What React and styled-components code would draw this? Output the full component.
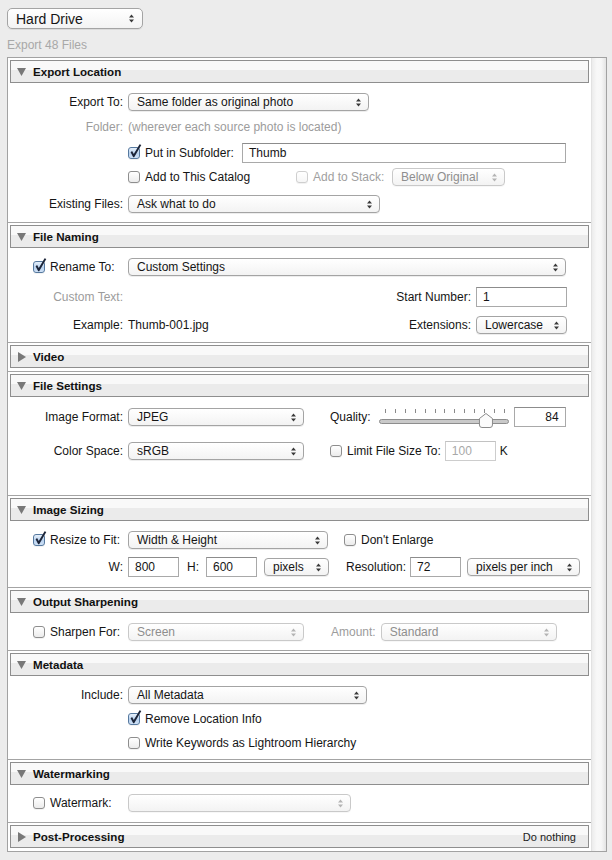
import React from "react";
import styled, { createGlobalStyle } from "styled-components";

const GlobalStyle = createGlobalStyle`
  html, body { margin: 0; padding: 0; background: #ececec; }
  body {
    font-family: "Liberation Sans", Arial, sans-serif;
    font-size: 12px;
    color: #151515;
  }
`;

const Page = styled.div`
  width: 612px;
  height: 860px;
  box-sizing: border-box;
  padding: 8px 0 0 7px;
  overflow: hidden;
`;

const Caption = styled.div`
  padding-top: 9px;
  line-height: 14px;
  height: 14px;
  margin-bottom: 5px;
  color: #a8a8a8;
  font-size: 12px;
`;

const Frame = styled.div`
  width: 600px;
  box-sizing: border-box;
  border: 1px solid #a2a2a2;
  display: flex;
  background: #fff;
`;

const Content = styled.div`
  flex: 1;
  min-width: 0;
  background: #fff;
`;

const ScrollTrack = styled.div`
  width: 15px;
  flex: none;
  border-left: 1px solid #e2e2e2;
  box-sizing: border-box;
  background: linear-gradient(90deg, #ececec 0%, #f8f8f8 35%, #f7f7f7 65%, #e4e4e4 100%);
`;

const Section = styled.div`
  border-top: ${(p) => (p.$first ? "none" : "1px solid #a4a4a4")};
`;

const Header = styled.div`
  margin: 2px 2px 0;
  height: 23px;
  box-sizing: border-box;
  border: 1px solid #8e8e8e;
  background: linear-gradient(#f9f9f9 0, #f9f9f9 45%, #ebebeb 45%, #ebebeb 100%);
  display: flex;
  align-items: center;
  padding: 0 12px 0 6px;
  font-weight: bold;
  font-size: 11.6px;
  color: #111;
`;

const HeaderTitle = styled.span`
  margin-left: ${(p) => p.$ml}px;
  flex: 1;
`;

const HeaderNote = styled.span`
  font-weight: normal;
  font-size: 11px;
  color: #222;
`;

const Body = styled.div`
  padding: ${(p) => p.$pt || 0}px 24px ${(p) => p.$pb || 0}px 0;
  height: ${(p) => (p.$h != null ? `${p.$h}px` : "auto")};
`;

const Row = styled.div`
  display: flex;
  align-items: center;
  height: ${(p) => p.$h}px;
`;

const LabelCell = styled.div`
  width: 120px;
  flex: none;
  box-sizing: border-box;
  display: flex;
  align-items: center;
  justify-content: ${(p) => (p.$left ? "flex-start" : "flex-end")};
  padding: ${(p) => (p.$left ? "0 0 0 25px" : "0 5px 0 0")};
  color: ${(p) => (p.$muted ? "#9c9c9c" : "#151515")};
  white-space: nowrap;
`;

const Text = styled.span`
  flex: none;
  white-space: nowrap;
  margin-left: ${(p) => p.$ml || 0}px;
  color: ${(p) => (p.$muted ? "#9c9c9c" : "#151515")};
`;

const Spacer = styled.div`
  flex: 1;
`;

const CheckItem = styled.div`
  display: flex;
  align-items: center;
  gap: 5px;
  flex: none;
  width: ${(p) => (p.$w ? `${p.$w}px` : "auto")};
  margin-left: ${(p) => p.$ml || 0}px;
  color: ${(p) => (p.$muted ? "#a0a0a0" : "#151515")};
  white-space: nowrap;
`;

const Box = styled.span`
  position: relative;
  width: 12px;
  height: 12px;
  flex: none;
  box-sizing: border-box;
  border-radius: 3px;
  border: 1px solid ${(p) => (p.$checked ? "#56799f" : p.$disabled ? "#cfcfcf" : "#8e8e8e")};
  background: ${(p) =>
    p.$checked
      ? "linear-gradient(#e6f0fb, #b9d2ef 55%, #cfe1f6)"
      : p.$disabled
      ? "linear-gradient(#ffffff, #f6f6f6)"
      : "linear-gradient(#ffffff, #ececec)"};
  box-shadow: 0 1px 0 rgba(0, 0, 0, 0.05);
`;

const Tick = styled.svg`
  position: absolute;
  left: 0px;
  top: -5px;
  overflow: visible;
`;

function Checkbox({ checked, disabled }) {
  return (
    <Box $checked={checked} $disabled={disabled}>
      {checked && (
        <Tick width="13" height="15" viewBox="0 0 13 15">
          <path
            d="M1.6 9.2 L3.1 8.1 L4.8 10.9 L10.6 1.2 L12.3 1.9 L5.2 14.3 L4.2 14.3 Z"
            fill="#1b2438"
          />
        </Tick>
      )}
    </Box>
  );
}

const PopupBox = styled.div`
  width: ${(p) => p.$w}px;
  height: ${(p) => p.$h || 18}px;
  flex: none;
  box-sizing: border-box;
  margin-left: ${(p) => p.$ml || 0}px;
  border: 1px solid ${(p) => (p.$disabled ? "#c9c9c9" : "#a4a4a4")};
  border-radius: ${(p) => p.$r || 4}px;
  background: linear-gradient(#ffffff, #f3f3f3);
  box-shadow: 0 1px 0 rgba(0, 0, 0, ${(p) => (p.$disabled ? 0.03 : 0.07)});
  display: flex;
  align-items: center;
  justify-content: space-between;
  padding: 0 ${(p) => p.$pr || 7}px 0 ${(p) => p.$pl || 8}px;
  font-size: ${(p) => p.$fs || 12}px;
  color: ${(p) => (p.$disabled ? "#8e8e8e" : "#151515")};
  white-space: nowrap;
  overflow: hidden;
`;

const Arrows = styled.svg`
  flex: none;
`;

function Popup({ w, h, ml, fs, r, pl, pr, disabled, children }) {
  return (
    <PopupBox $w={w} $h={h} $ml={ml} $fs={fs} $r={r} $pl={pl} $pr={pr} $disabled={disabled}>
      <span>{children}</span>
      <Arrows width="5" height="9" viewBox="0 0 5 9">
        <path d="M0 3.6 L2.5 0.4 L5 3.6 Z M0 5.4 L2.5 8.6 L5 5.4 Z" fill={disabled ? "#b4b4b4" : "#3a3a3a"} />
      </Arrows>
    </PopupBox>
  );
}

const Field = styled.div`
  width: ${(p) => p.$w}px;
  height: 20px;
  flex: none;
  box-sizing: border-box;
  margin-left: ${(p) => p.$ml || 0}px;
  border: 1px solid ${(p) => (p.$disabled ? "#cdcdcd" : "#a9a9a9")};
  border-top-color: ${(p) => (p.$disabled ? "#c2c2c2" : "#8c8c8c")};
  background: #fff;
  display: flex;
  align-items: center;
  justify-content: ${(p) => (p.$right ? "flex-end" : "flex-start")};
  padding: 0 6px;
  color: ${(p) => (p.$disabled ? "#a8a8a8" : "#151515")};
`;

const SliderSvg = styled.svg`
  flex: none;
  margin-left: ${(p) => p.$ml || 0}px;
  display: block;
`;

function QualitySlider({ value }) {
  const ticks = Array.from({ length: 13 }, (_, i) => 7 + i * 9.9);
  const cx = 7 + (value / 100) * 119 + 1;
  return (
    <SliderSvg $ml={7} width="132" height="26" viewBox="0 0 132 26">
      {ticks.map((x, i) => (
        <rect key={i} x={Math.round(x)} y="5" width="1" height="4" fill="#8a8a8a" />
      ))}
      <rect x="1.5" y="15.5" width="129" height="4" rx="2" fill="#c9c9c9" stroke="#8d8d8d" />
      <path
        d={`M${cx - 6.5} 14.5 L${cx} 9.5 L${cx + 6.5} 14.5 L${cx + 6.5} 21 Q${cx + 6.5} 23.5 ${cx + 4} 23.5 L${cx - 4} 23.5 Q${cx - 6.5} 23.5 ${cx - 6.5} 21 Z`}
        fill="#fbfbfb"
        stroke="#8a8a8a"
      />
    </SliderSvg>
  );
}

const Triangle = styled.svg`
  flex: none;
`;

function SectionHeader({ title, open, note }) {
  return (
    <Header>
      {open ? (
        <Triangle width="9" height="8" viewBox="0 0 9 8">
          <path d="M0 0 L9 0 L4.5 8 Z" fill="#787878" />
        </Triangle>
      ) : (
        <Triangle width="9" height="10" viewBox="0 0 9 10">
          <path d="M1 0 L9 5 L1 10 Z" fill="#787878" />
        </Triangle>
      )}
      <HeaderTitle $ml={7}>{title}</HeaderTitle>
      {note && <HeaderNote>{note}</HeaderNote>}
    </Header>
  );
}

export default function App() {
  return (
    <>
      <GlobalStyle />
      <Page>
        <Popup w={136} h={21} fs={14} r={5} pl={8} pr={8}>
          Hard Drive
        </Popup>
        <Caption>Export 48 Files</Caption>
        <Frame>
          <Content>
            <Section $first>
              <SectionHeader title="Export Location" open />
              <Body $pt={7} $pb={2}>
                <Row $h={24}>
                  <LabelCell>Export To:</LabelCell>
                  <Popup w={241}>Same folder as original photo</Popup>
                </Row>
                <Row $h={26}>
                  <LabelCell $muted>Folder:</LabelCell>
                  <Text $muted>(wherever each source photo is located)</Text>
                </Row>
                <Row $h={26}>
                  <LabelCell />
                  <CheckItem $w={114}>
                    <Checkbox checked />
                    Put in Subfolder:
                  </CheckItem>
                  <Field $w={324}>Thumb</Field>
                </Row>
                <Row $h={22}>
                  <LabelCell />
                  <CheckItem $w={168}>
                    <Checkbox />
                    Add to This Catalog
                  </CheckItem>
                  <CheckItem $w={96} $muted>
                    <Checkbox disabled />
                    Add to Stack:
                  </CheckItem>
                  <Popup w={113} disabled>
                    Below Original
                  </Popup>
                </Row>
                <Row $h={32}>
                  <LabelCell>Existing Files:</LabelCell>
                  <Popup w={252}>Ask what to do</Popup>
                </Row>
              </Body>
            </Section>

            <Section>
              <SectionHeader title="File Naming" open />
              <Body $pt={7} $pb={7}>
                <Row $h={24}>
                  <LabelCell $left>
                    <CheckItem>
                      <Checkbox checked />
                      Rename To:
                    </CheckItem>
                  </LabelCell>
                  <Popup w={438}>Custom Settings</Popup>
                </Row>
                <Row $h={36}>
                  <LabelCell $muted>Custom Text:</LabelCell>
                  <Spacer />
                  <Text>Start Number:</Text>
                  <Field $w={91} $ml={5}>1</Field>
                </Row>
                <Row $h={20}>
                  <LabelCell>Example:</LabelCell>
                  <Text>Thumb-001.jpg</Text>
                  <Spacer />
                  <Text>Extensions:</Text>
                  <Popup w={91} ml={5}>
                    Lowercase
                  </Popup>
                </Row>
              </Body>
            </Section>

            <Section>
              <SectionHeader title="Video" />
              <Body $h={3} />
            </Section>

            <Section>
              <SectionHeader title="File Settings" open />
              <Body $pt={8} $pb={22}>
                <Row $h={24}>
                  <LabelCell>Image Format:</LabelCell>
                  <Popup w={176}>JPEG</Popup>
                  <Text $ml={26}>Quality:</Text>
                  <QualitySlider value={84} />
                  <Field $w={52} $ml={4} $right>
                    84
                  </Field>
                </Row>
                <Row $h={44}>
                  <LabelCell>Color Space:</LabelCell>
                  <Popup w={176}>sRGB</Popup>
                  <CheckItem $ml={26}>
                    <Checkbox />
                    Limit File Size To:
                  </CheckItem>
                  <Field $w={51} $ml={4} $disabled>
                    100
                  </Field>
                  <Text $ml={4}>K</Text>
                </Row>
              </Body>
            </Section>

            <Section>
              <SectionHeader title="Image Sizing" open />
              <Body $pt={7} $pb={5}>
                <Row $h={24}>
                  <LabelCell $left>
                    <CheckItem>
                      <Checkbox checked />
                      Resize to Fit:
                    </CheckItem>
                  </LabelCell>
                  <Popup w={200}>Width &amp; Height</Popup>
                  <CheckItem $ml={16}>
                    <Checkbox />
                    Don't Enlarge
                  </CheckItem>
                </Row>
                <Row $h={30}>
                  <LabelCell>W:</LabelCell>
                  <Field $w={51}>800</Field>
                  <Text $ml={8}>H:</Text>
                  <Field $w={51} $ml={7}>
                    600
                  </Field>
                  <Popup w={65} ml={7}>
                    pixels
                  </Popup>
                  <Text $ml={17}>Resolution:</Text>
                  <Field $w={51} $ml={4}>
                    72
                  </Field>
                  <Popup w={113} ml={6}>
                    pixels per inch
                  </Popup>
                </Row>
              </Body>
            </Section>

            <Section>
              <SectionHeader title="Output Sharpening" open />
              <Body $pt={7} $pb={6}>
                <Row $h={24}>
                  <LabelCell $left>
                    <CheckItem>
                      <Checkbox />
                      Sharpen For:
                    </CheckItem>
                  </LabelCell>
                  <Popup w={176} disabled>
                    Screen
                  </Popup>
                  <Text $ml={27} $muted>
                    Amount:
                  </Text>
                  <Popup w={176} ml={5} disabled>
                    Standard
                  </Popup>
                </Row>
              </Body>
            </Section>

            <Section>
              <SectionHeader title="Metadata" open />
              <Body $pt={7} $pb={4}>
                <Row $h={24}>
                  <LabelCell>Include:</LabelCell>
                  <Popup w={239}>All Metadata</Popup>
                </Row>
                <Row $h={24}>
                  <LabelCell />
                  <CheckItem>
                    <Checkbox checked />
                    Remove Location Info
                  </CheckItem>
                </Row>
                <Row $h={24}>
                  <LabelCell />
                  <CheckItem>
                    <Checkbox />
                    Write Keywords as Lightroom Hierarchy
                  </CheckItem>
                </Row>
              </Body>
            </Section>

            <Section>
              <SectionHeader title="Watermarking" open />
              <Body $pt={6} $pb={7}>
                <Row $h={24}>
                  <LabelCell $left>
                    <CheckItem>
                      <Checkbox />
                      Watermark:
                    </CheckItem>
                  </LabelCell>
                  <Popup w={223} disabled />
                </Row>
              </Body>
            </Section>

            <Section>
              <SectionHeader title="Post-Processing" note="Do nothing" />
              <Body $h={3} />
            </Section>
          </Content>
          <ScrollTrack />
        </Frame>
      </Page>
    </>
  );
}
